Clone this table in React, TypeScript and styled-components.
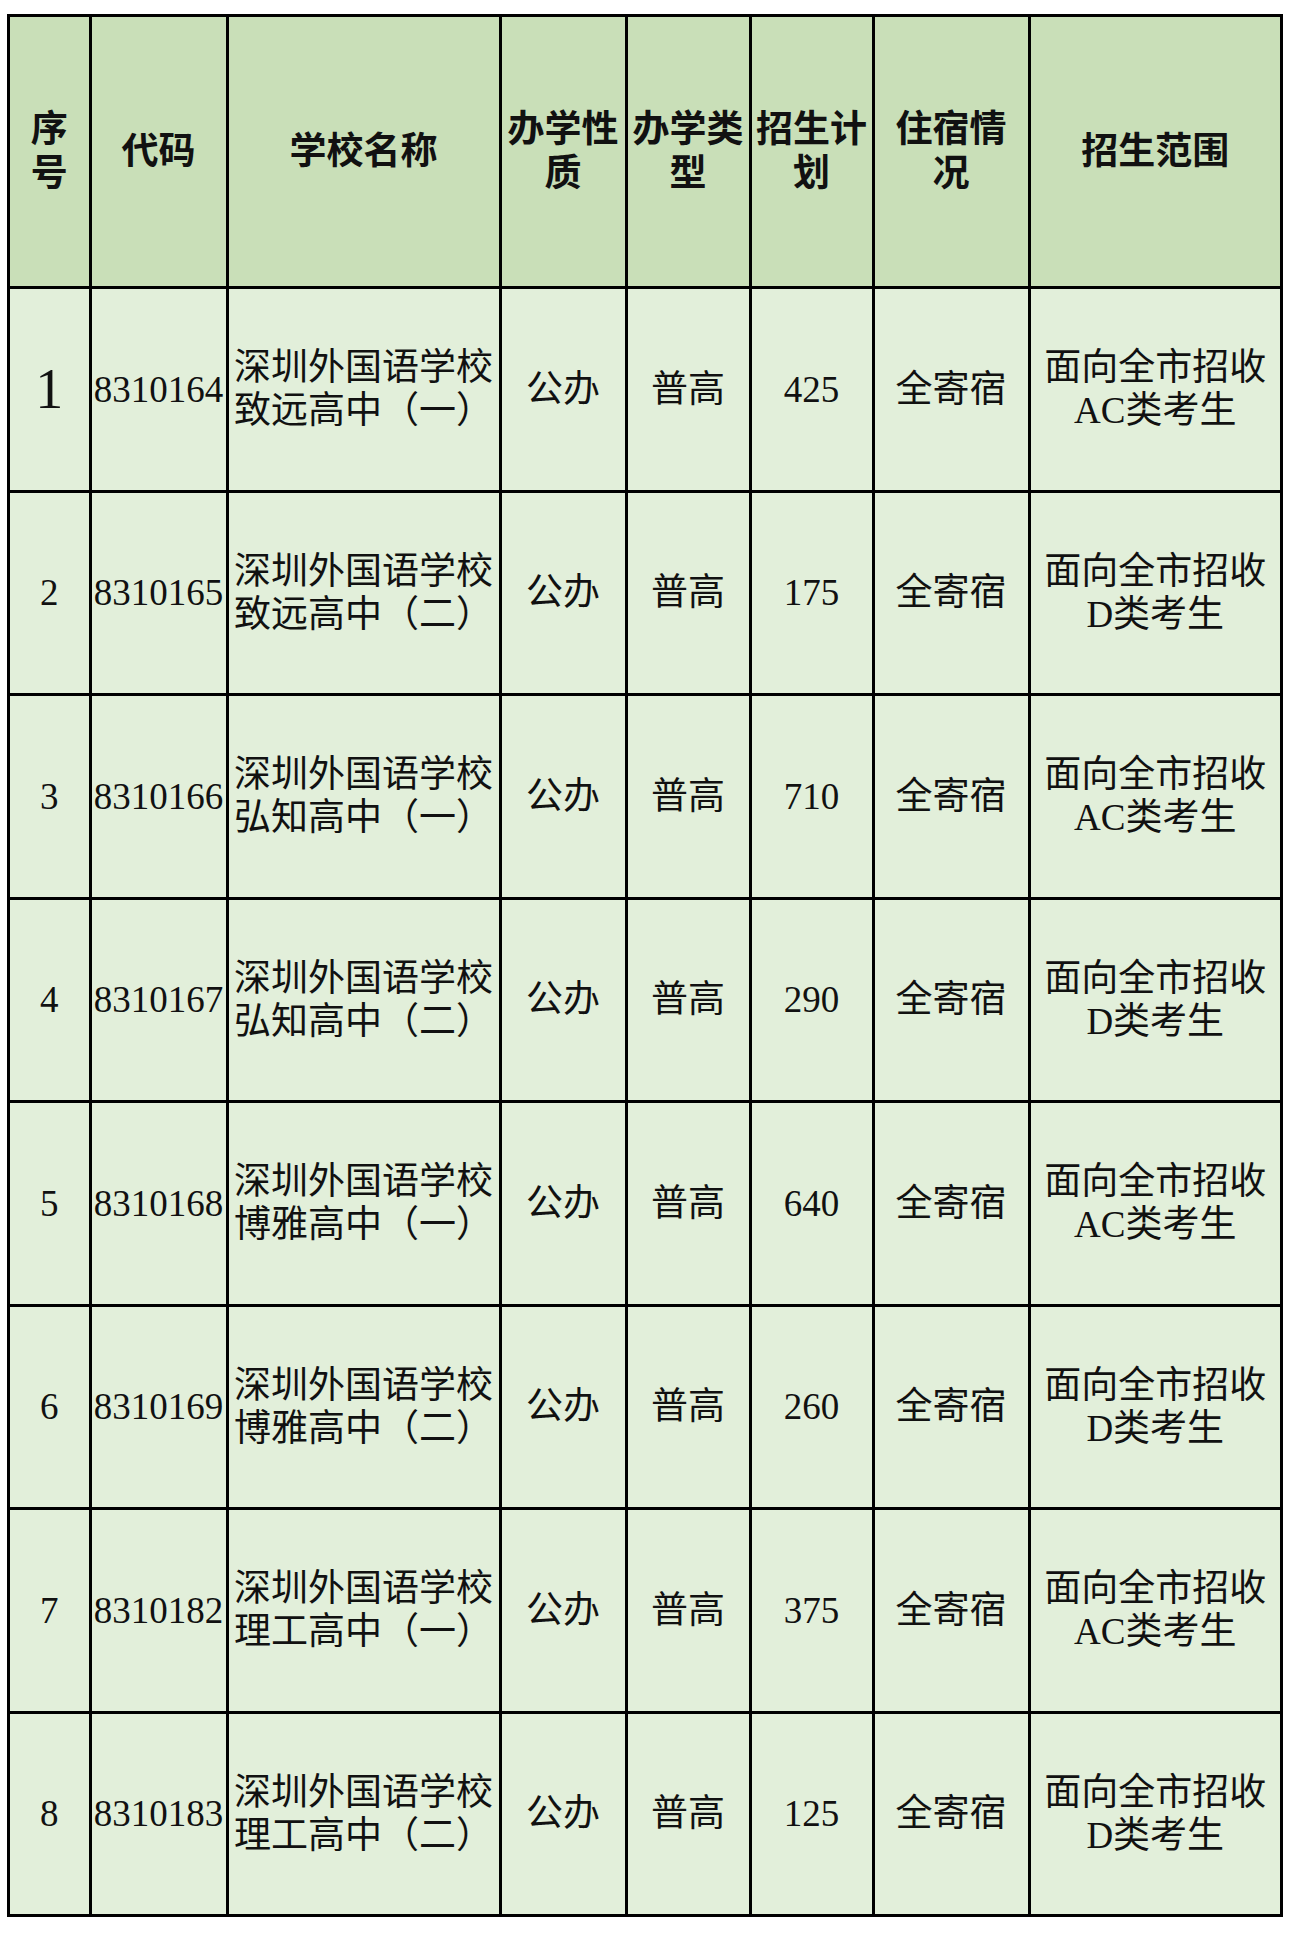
import React from "react";
import styled, { createGlobalStyle } from "styled-components";

const GlobalStyle = createGlobalStyle`
  html, body {
    margin: 0;
    padding: 0;
    background: #ffffff;
  }
`;

const Page = styled.div`
  padding: 14px 0 20px 7px;
  width: 1290px;
  box-sizing: border-box;
`;

const Grid = styled.div`
  display: grid;
  width: 1276px;
  grid-template-columns: 78.5px 134px 270px 123px 121px 120px 153px 249.5px;
  grid-template-rows: 269px repeat(8, 200.5px);
  gap: 3px;
  padding: 3px;
  box-sizing: border-box;
  background: #000000;
`;

const HeadCell = styled.div`
  display: flex;
  flex-direction: column;
  align-items: center;
  justify-content: center;
  padding-bottom: 8px;
  box-sizing: border-box;
  background: #c9dfb8;
  color: #111111;
  font-family: "Noto Sans CJK SC", sans-serif;
  font-weight: 700;
  font-size: 37px;
  line-height: 44px;
  text-align: center;
  white-space: nowrap;
`;

const Cell = styled.div<{ $big?: boolean }>`
  display: flex;
  flex-direction: column;
  align-items: center;
  justify-content: center;
  background: #e2efda;
  color: #111111;
  font-family: "Liberation Serif", "Noto Sans CJK SC", serif;
  font-weight: 400;
  font-size: ${({ $big }) => ($big ? "56px" : "37px")};
  line-height: ${({ $big }) => ($big ? "56px" : "43px")};
  text-align: center;
  white-space: nowrap;
`;

const Line = styled.span`
  display: block;
`;

const headers: string[][] = [
  ["序", "号"],
  ["代码"],
  ["学校名称"],
  ["办学性", "质"],
  ["办学类", "型"],
  ["招生计", "划"],
  ["住宿情", "况"],
  ["招生范围"],
];

interface Row {
  code: string;
  branch: string;
  plan: number;
  group: string;
}

const rows: Row[] = [
  { code: "8310164", branch: "致远高中（一）", plan: 425, group: "AC" },
  { code: "8310165", branch: "致远高中（二）", plan: 175, group: "D" },
  { code: "8310166", branch: "弘知高中（一）", plan: 710, group: "AC" },
  { code: "8310167", branch: "弘知高中（二）", plan: 290, group: "D" },
  { code: "8310168", branch: "博雅高中（一）", plan: 640, group: "AC" },
  { code: "8310169", branch: "博雅高中（二）", plan: 260, group: "D" },
  { code: "8310182", branch: "理工高中（一）", plan: 375, group: "AC" },
  { code: "8310183", branch: "理工高中（二）", plan: 125, group: "D" },
];

const App: React.FC = () => {
  return (
    <Page>
      <GlobalStyle />
      <Grid>
        {headers.map((lines, i) => (
          <HeadCell key={`h${i}`}>
            {lines.map((l) => (
              <Line key={l}>{l}</Line>
            ))}
          </HeadCell>
        ))}

        {rows.map((row, i) => (
          <React.Fragment key={row.code}>
            <Cell $big={i === 0}>{i + 1}</Cell>
            <Cell>{row.code}</Cell>
            <Cell>
              <Line>深圳外国语学校</Line>
              <Line>{row.branch}</Line>
            </Cell>
            <Cell>公办</Cell>
            <Cell>普高</Cell>
            <Cell>{row.plan}</Cell>
            <Cell>全寄宿</Cell>
            <Cell>
              <Line>面向全市招收</Line>
              <Line>{row.group}类考生</Line>
            </Cell>
          </React.Fragment>
        ))}
      </Grid>
    </Page>
  );
};

export default App;
